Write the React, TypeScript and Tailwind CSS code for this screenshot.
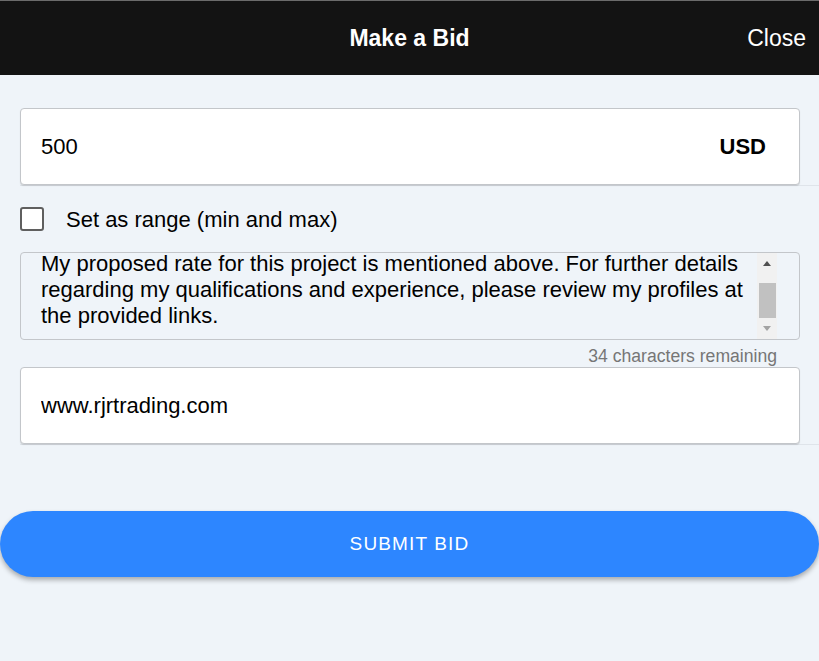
import { useState } from 'react';

export default function App() {
  const [amount, setAmount] = useState('500');
  const [isRange, setIsRange] = useState(false);
  const [website, setWebsite] = useState('www.rjrtrading.com');

  const proposal =
    'My proposed rate for this project is mentioned above. For further details regarding my qualifications and experience, please review my profiles at the provided links.';

  return (
    <div className="min-h-[661px] w-[819px] bg-[#eff4f9] font-['Liberation_Sans',Arial,sans-serif] text-black">
      <header className="flex h-[75px] items-center border-t border-[#6b6b6b] bg-[#131313] text-white">
        <div className="w-[120px]" />
        <h1 className="flex-1 text-center text-[23px] font-bold">Make a Bid</h1>
        <button className="w-[120px] pr-[13px] text-right text-[23px]">Close</button>
      </header>

      <div className="pl-[20px] pt-[33px]">
        <div className="border-b border-[#dfe4ea]">
          <div className="flex h-[77px] w-[780px] items-center rounded-[4px] border border-[#c3c6ca] bg-white pl-[20px] pr-[33px] shadow-[0_1px_1px_rgba(0,0,0,0.12)]">
            <input
              value={amount}
              onChange={(e) => setAmount(e.target.value)}
              className="flex-1 bg-transparent text-[22px] outline-none"
            />
            <span className="text-[22px] font-bold">USD</span>
          </div>
        </div>

        <label className="mt-[21px] flex h-[24px] cursor-pointer items-center gap-[22px]">
          <span
            onClick={() => setIsRange(!isRange)}
            className={`h-[24px] w-[24px] rounded-[3px] border-2 border-[#5f5f5f] ${isRange ? 'bg-[#2d86ff]' : 'bg-white'}`}
          />
          <span className="text-[22px]">Set as range (min and max)</span>
        </label>

        <div className="mt-[21px] flex h-[88px] w-[780px] overflow-hidden rounded-[4px] border border-[#c3c6ca] bg-[#eff4f9]">
          <div className="flex-1 overflow-hidden pl-[20px] pr-[8px]">
            <p className="-mt-[2px] text-[22px] leading-[26px]">{proposal}</p>
          </div>
          <div className="mr-[22px] flex w-[20px] flex-col items-center bg-[#f1f1f1]">
            <div className="flex h-[20px] items-center justify-center">
              <div className="h-0 w-0 border-x-[4px] border-b-[5px] border-x-transparent border-b-[#505050]" />
            </div>
            <div className="mt-[10px] h-[35px] w-[17px] bg-[#c1c1c1]" />
            <div className="flex flex-1 items-center justify-center">
              <div className="h-0 w-0 border-x-[4px] border-t-[5px] border-x-transparent border-t-[#a3a3a3]" />
            </div>
          </div>
        </div>

        <div className="mr-[42px] mt-[6px] text-right text-[17.6px] leading-[20px] text-[#767676]">
          34 characters remaining
        </div>

        <div className="mt-[1px] border-b border-[#dfe4ea]">
          <div className="flex h-[77px] w-[780px] items-center rounded-[4px] border border-[#c3c6ca] bg-white pl-[20px] pr-[33px] shadow-[0_1px_1px_rgba(0,0,0,0.12)]">
            <input
              value={website}
              onChange={(e) => setWebsite(e.target.value)}
              className="flex-1 bg-transparent text-[22px] outline-none"
            />
          </div>
        </div>
      </div>

      <div className="pt-[66px]">
        <button className="h-[66px] w-full rounded-full bg-[#2d86ff] text-[19px] tracking-[0.06em] text-white shadow-[0_3px_5px_rgba(0,0,0,0.3)]">
          SUBMIT BID
        </button>
      </div>
    </div>
  );
}
